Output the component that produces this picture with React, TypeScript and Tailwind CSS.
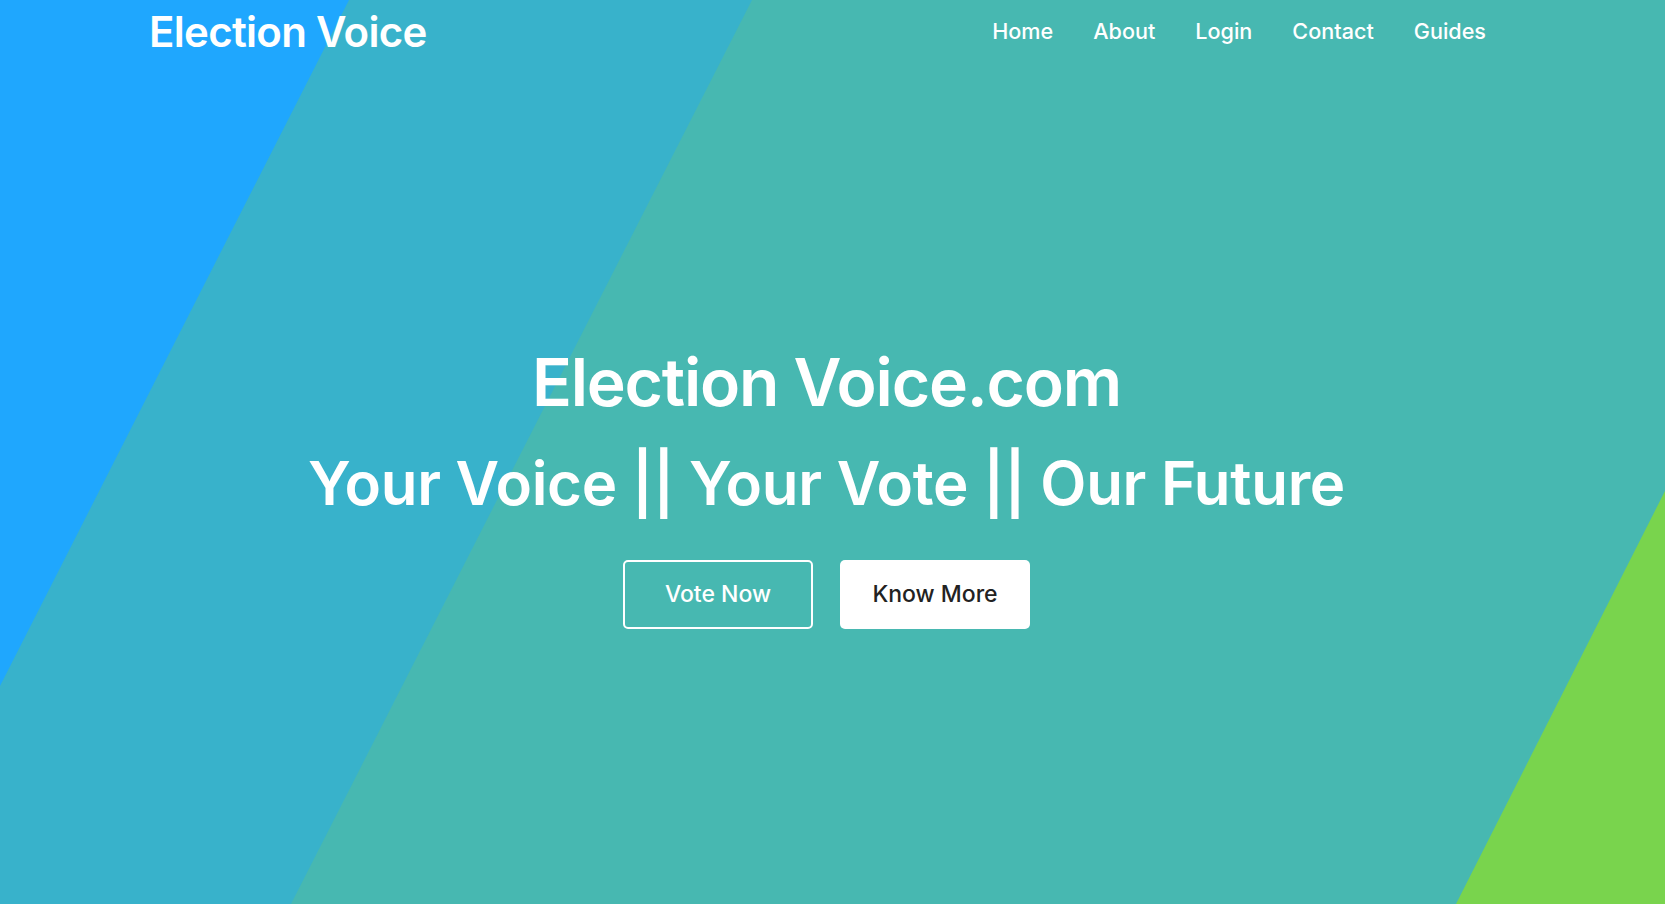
import React from 'react';

const navLinks = ["Home", "About", "Login", "Contact", "Guides"];

const Backdrop = () => (
  <svg
    className="absolute inset-0 w-full h-full"
    viewBox="0 0 1665 904"
    preserveAspectRatio="none"
    aria-hidden="true"
  >
    <rect x="0" y="0" width="1665" height="904" fill="#47b8b1" />
    <polygon points="0,0 752,0 291,904 0,904" fill="#38b2cb" />
    <polygon points="0,0 349,0 0,686" fill="#1fa7fe" />
    <polygon points="1665,491 1665,904 1456,904" fill="#79d44d" />
  </svg>
);

const App = () => {
  return (
    <div
      className="relative w-full h-[904px] overflow-hidden text-white"
      style={{ fontFamily: '"Inter", "Noto Sans", sans-serif' }}
    >
      <Backdrop />

      <div className="relative flex flex-col h-full">
        {/* Header */}
        <header className="flex items-center justify-between h-[63px] pl-[149px] pr-[179px]">
          <a href="#" className="text-[42px] leading-none font-semibold tracking-[-0.7px]">
            Election Voice
          </a>
          <nav className="flex items-center gap-[40px]">
            {navLinks.map((link) => (
              <a key={link} href="#" className="text-[21.6px] leading-none font-medium">
                {link}
              </a>
            ))}
          </nav>
        </header>

        {/* Hero */}
        <section className="flex flex-col items-center pt-[286px] pr-[12px]">
          <h1 className="text-[66px] leading-none font-semibold tracking-[-1.2px]">Election Voice.com</h1>
          <h2 className="mt-[38px] text-[60px] leading-none font-semibold tracking-[-0.3px]">
            Your Voice || Your Vote || Our Future
          </h2>
          <div className="flex gap-[27px] mt-[47px]">
            <button className="w-[190px] h-[69px] rounded-[5px] border-2 border-white text-[23px] font-medium text-white">
              Vote Now
            </button>
            <button className="w-[190px] h-[69px] rounded-[5px] bg-white text-[23px] font-medium text-[#222]">
              Know More
            </button>
          </div>
        </section>
      </div>
    </div>
  );
};

export default App;
